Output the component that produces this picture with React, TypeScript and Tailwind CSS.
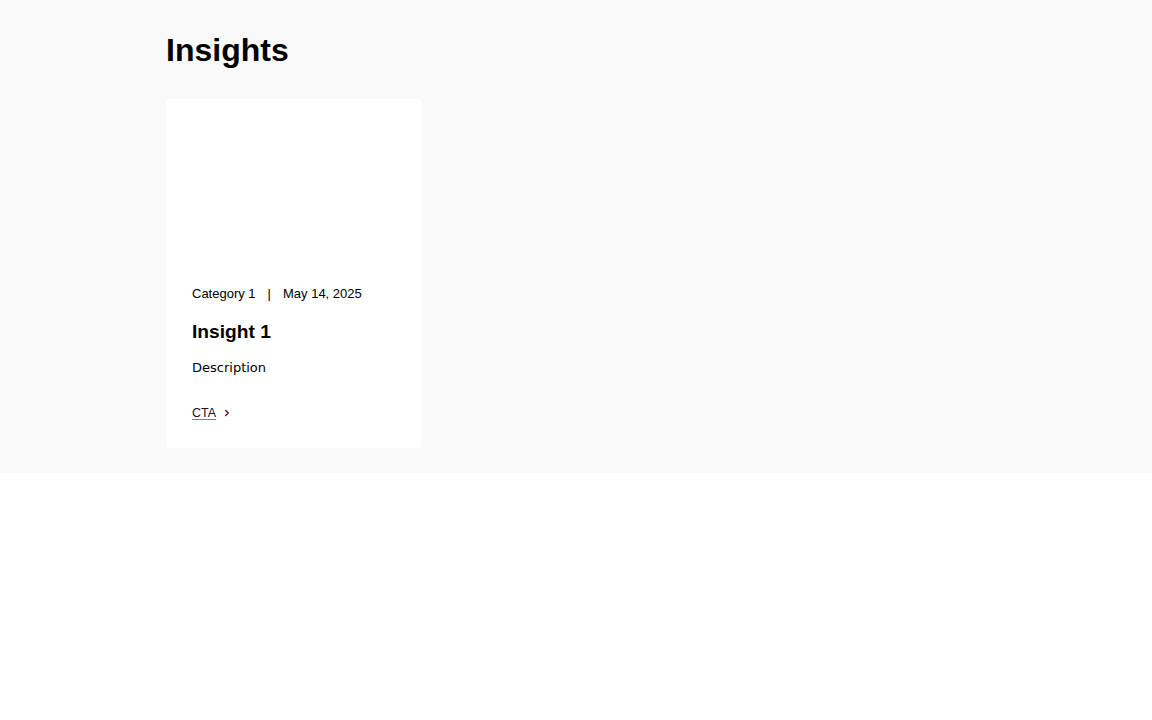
import React from "react";
import { ChevronRight } from "lucide-react";

const insights = [
  { category: "Category 1", date: "May 14, 2025", title: "Insight 1", description: "Description", cta: "CTA" },
];

export default function App() {
  return (
    <div className="min-h-screen bg-white font-['Liberation_Sans',Arial,sans-serif] text-black">
      <section className="bg-[#f9f9f9] pt-8 pb-[25px]">
        <div className="w-[820px] mx-auto">
          <h2 className="text-[32px] leading-[1.15] font-bold mb-[30px]">Insights</h2>

          <div className="grid grid-cols-3 gap-6">
            {insights.map((item) => (
              <article key={item.title} className="w-[256px] bg-white rounded-[4px] flex flex-col">
                {/* image placeholder */}
                <div className="h-[162px]" />
                <div className="px-[26px] pt-[25px] pb-[27px] flex flex-col">
                  <div className="text-[13px] leading-[15px] flex items-center">
                    <span>{item.category}</span>
                    <span className="px-3">|</span>
                    <span>{item.date}</span>
                  </div>
                  <h3 className="mt-[20px] text-[19.2px] leading-[22px] font-bold">{item.title}</h3>
                  <p className="mt-[17px] text-[13px] leading-[15px] font-['DejaVu_Sans',sans-serif]">
                    {item.description}
                  </p>
                  <a
                    href="#"
                    className="mt-[31px] flex items-center gap-[6px] text-[12.5px] leading-[15px] text-[#2a0a14]"
                  >
                    <span className="underline decoration-[#b0607c] underline-offset-[2px]">{item.cta}</span>
                    <ChevronRight size={10} strokeWidth={3.5} className="text-[#6b0f24]" />
                  </a>
                </div>
              </article>
            ))}
          </div>
        </div>
      </section>
    </div>
  );
}
